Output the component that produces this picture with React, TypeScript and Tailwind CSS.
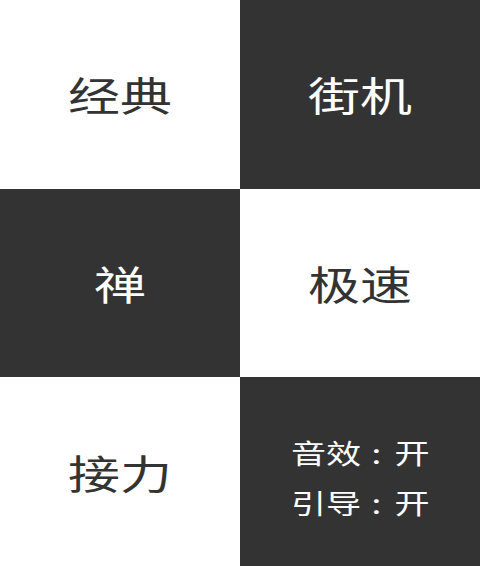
import React from 'react';

const font = { fontFamily: '"Noto Sans CJK SC", "Noto Sans", sans-serif' };

const Tile = ({ dark, children }: { dark?: boolean; children: React.ReactNode }) => (
  <div
    className={`flex flex-col items-center justify-center ${
      dark ? 'bg-[#333333] text-white' : 'bg-white text-[#333333]'
    }`}
  >
    {children}
  </div>
);

const Title = ({ children }: { children: React.ReactNode }) => (
  <span className="inline-block scale-x-[1.3] text-[40px] leading-none">{children}</span>
);

const Setting = ({ label, value }: { label: string; value: string }) => (
  <span className="inline-block scale-x-[1.3] whitespace-pre text-[27px] leading-[28px]">
    {label}
    <span className="ml-[8px] mr-[10px]">:</span>
    {value}
  </span>
);

export default function App() {
  return (
    <div className="grid h-[566px] w-[480px] grid-cols-2 grid-rows-3 overflow-hidden" style={font}>
      <Tile>
        <Title>经典</Title>
      </Tile>
      <Tile dark>
        <Title>街机</Title>
      </Tile>
      <Tile dark>
        <Title>禅</Title>
      </Tile>
      <Tile>
        <Title>极速</Title>
      </Tile>
      <Tile>
        <Title>接力</Title>
      </Tile>
      <Tile dark>
        <div className="flex flex-col items-center gap-[22px] pt-[12px]">
          <Setting label="音效" value="开" />
          <Setting label="引导" value="开" />
        </div>
      </Tile>
    </div>
  );
}
